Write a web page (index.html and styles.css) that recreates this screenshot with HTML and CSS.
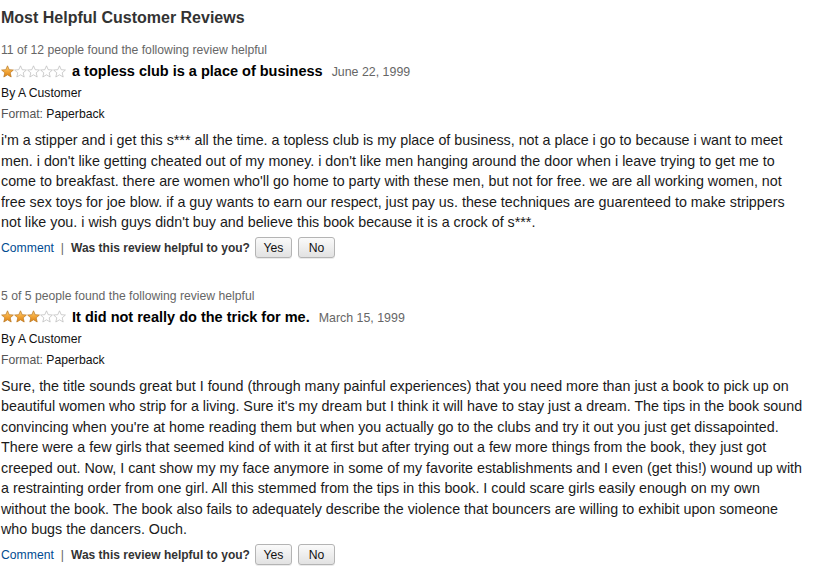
FILE: index.html
```html
<!DOCTYPE html>
<html>
<head>
<meta charset="utf-8">
<link rel="stylesheet" href="styles.css">
</head>
<body>
<svg width="0" height="0" class="defs">
  <defs>
    <linearGradient id="gold" x1="0" y1="0" x2="0" y2="1">
      <stop offset="0" stop-color="#fbd27a"/>
      <stop offset="0.5" stop-color="#f3a73a"/>
      <stop offset="1" stop-color="#d97f0e"/>
    </linearGradient>
    <symbol id="full" viewBox="0 0 13 13">
      <polygon points="6.5,0.8 8.2,4.7 12.4,5 9.2,7.8 10.2,12 6.5,9.8 2.8,12 3.8,7.8 0.6,5 4.8,4.7" fill="url(#gold)" stroke="#b9741c" stroke-width="0.7"/>
    </symbol>
    <symbol id="empty" viewBox="0 0 13 13">
      <polygon points="6.5,0.8 8.2,4.7 12.4,5 9.2,7.8 10.2,12 6.5,9.8 2.8,12 3.8,7.8 0.6,5 4.8,4.7" fill="#fff" stroke="#b8b8b8" stroke-width="0.7"/>
    </symbol>
  </defs>
</svg>
<div class="page">
  <h2 class="heading">Most Helpful Customer Reviews</h2>

  <div class="review">
    <div class="helpful">11 of 12 people found the following review helpful</div>
    <div class="title-row">
      <span class="stars">
        <svg class="star"><use href="#full"/></svg><svg class="star"><use href="#empty"/></svg><svg class="star"><use href="#empty"/></svg><svg class="star"><use href="#empty"/></svg><svg class="star"><use href="#empty"/></svg>
      </span>
      <span class="title">a topless club is a place of business</span>
      <span class="date">June 22, 1999</span>
    </div>
    <div class="meta by">By A Customer</div>
    <div class="meta"><span class="label">Format:</span> Paperback</div>
    <p class="text">i'm a stipper and i get this s*** all the time. a topless club is my place of business, not a place i go to because i want to meet men. i don't like getting cheated out of my money. i don't like men hanging around the door when i leave trying to get me to come to breakfast. there are women who'll go home to party with these men, but not for free. we are all working women, not free sex toys for joe blow. if a guy wants to earn our respect, just pay us. these techniques are guarenteed to make strippers not like you. i wish guys didn't buy and believe this book because it is a crock of s***.</p>
    <div class="actions">
      <a class="link">Comment</a><span class="sep">|</span><span class="ask">Was this review helpful to you?</span>
      <button class="btn">Yes</button><button class="btn">No</button>
    </div>
  </div>

  <div class="review">
    <div class="helpful">5 of 5 people found the following review helpful</div>
    <div class="title-row">
      <span class="stars">
        <svg class="star"><use href="#full"/></svg><svg class="star"><use href="#full"/></svg><svg class="star"><use href="#full"/></svg><svg class="star"><use href="#empty"/></svg><svg class="star"><use href="#empty"/></svg>
      </span>
      <span class="title">It did not really do the trick for me.</span>
      <span class="date">March 15, 1999</span>
    </div>
    <div class="meta by">By A Customer</div>
    <div class="meta"><span class="label">Format:</span> Paperback</div>
    <p class="text">Sure, the title sounds great but I found (through many painful experiences) that you need more than just a book to pick up on beautiful women who strip for a living. Sure it's my dream but I think it will have to stay just a dream. The tips in the book sound convincing when you're at home reading them but when you actually go to the clubs and try it out you just get dissapointed. There were a few girls that seemed kind of with it at first but after trying out a few more things from the book, they just got creeped out. Now, I cant show my my face anymore in some of my favorite establishments and I even (get this!) wound up with a restrainting order from one girl. All this stemmed from the tips in this book. I could scare girls easily enough on my own without the book. The book also fails to adequately describe the violence that bouncers are willing to exhibit upon someone who bugs the dancers. Ouch.</p>
    <div class="actions">
      <a class="link">Comment</a><span class="sep">|</span><span class="ask">Was this review helpful to you?</span>
      <button class="btn">Yes</button><button class="btn">No</button>
    </div>
  </div>
</div>
</body>
</html>
```
FILE: styles.css
```css
html, body {
  margin: 0;
  padding: 0;
  background: #fff;
}
body {
  font-family: "Liberation Sans", Arial, Helvetica, sans-serif;
  color: #111;
}
.defs {
  position: absolute;
  width: 0;
  height: 0;
}
.page {
  padding: 7px 0 0 1px;
  width: 804px;
}
.heading {
  margin: 0 0 11px 0;
  font-size: 16px;
  font-weight: bold;
  color: #333;
  line-height: 22px;
}
.review {
  margin-bottom: 26px;
}
.helpful {
  font-size: 12.2px;
  color: #666;
  line-height: 20px;
}
.title-row {
  display: flex;
  align-items: baseline;
  height: 22px;
  line-height: 22px;
}
.stars {
  display: inline-flex;
  align-self: center;
  margin-right: 6px;
}
.star {
  width: 13px;
  height: 13px;
}
.title {
  font-size: 14.5px;
  font-weight: bold;
  color: #000;
}
.date {
  font-size: 12.4px;
  color: #666;
  margin-left: 9px;
}
.meta {
  font-size: 12.2px;
  color: #111;
  line-height: 20px;
}
.meta.by {
  line-height: 22px;
}
.label {
  color: #555;
}
.text {
  margin: 6px 0 3px 0;
  font-size: 14.3px;
  line-height: 20.5px;
  color: #1a1a1a;
}
.actions {
  display: flex;
  align-items: center;
  font-size: 12.2px;
  height: 24px;
}
.link {
  color: #004b91;
}
.sep {
  color: #666;
  margin: 0 7px;
}
.ask {
  font-weight: bold;
  font-size: 12px;
  color: #333;
  margin-right: 5px;
}
.btn {
  font-family: "Liberation Sans", Arial, sans-serif;
  font-size: 12.2px;
  color: #111;
  width: 37px;
  height: 21px;
  padding: 0;
  margin-right: 6px;
  border: 1px solid #b4b4b4;
  border-radius: 3px;
  background: linear-gradient(#fafafa, #e2e2e2);
  box-shadow: 0 1px 0 rgba(0,0,0,0.08);
}
```
